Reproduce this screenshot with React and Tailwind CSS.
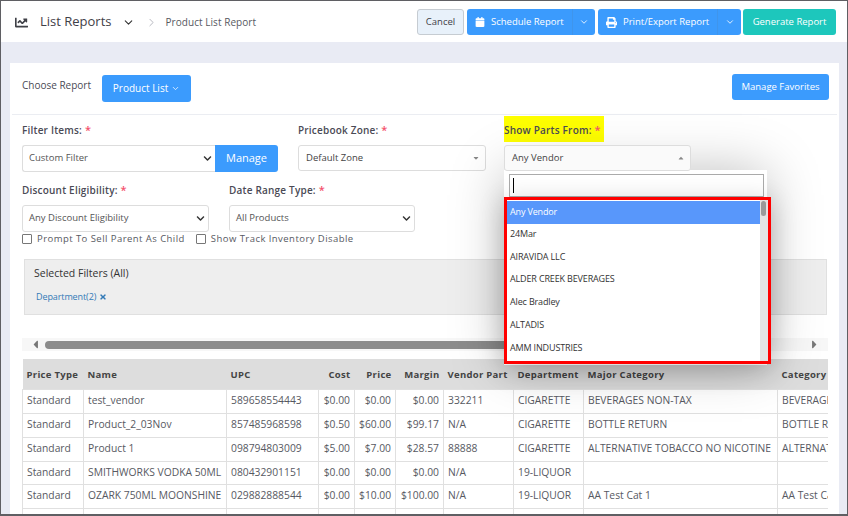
import React from "react";
import { FaChartLine, FaCalendar, FaPrint, FaTimes, FaChevronDown, FaCaretUp, FaCaretDown, FaCaretLeft, FaCaretRight } from "react-icons/fa";
import { ChevronDown, ChevronRight } from "lucide-react";

const cols = [
  ["Price Type", 61, "left"], ["Name", 143, "left"], ["UPC", 92, "left"], ["Cost", 36, "right"], ["Price", 41, "right"],
  ["Margin", 48, "right"], ["Vendor Part", 70, "left"], ["Department", 70, "left"], ["Major Category", 194, "left"], ["Category", 90, "left"],
];
const rows = [
  ["Standard", "test_vendor", "589658554443", "$0.00", "$0.00", "$0.00", "332211", "CIGARETTE", "BEVERAGES NON-TAX", "BEVERAGES NON-TAX"],
  ["Standard", "Product_2_03Nov", "857485968598", "$0.50", "$60.00", "$99.17", "N/A", "CIGARETTE", "BOTTLE RETURN", "BOTTLE RETURN"],
  ["Standard", "Product 1", "098794803009", "$5.00", "$7.00", "$28.57", "88888", "CIGARETTE", "ALTERNATIVE TOBACCO NO NICOTINE", "ALTERNATIVE"],
  ["Standard", "SMITHWORKS VODKA 50ML", "080432901151", "$0.00", "$0.00", "$0.00", "N/A", "19-LIQUOR", "", ""],
  ["Standard", "OZARK 750ML MOONSHINE", "029882888544", "$0.00", "$10.00", "$100.00", "N/A", "19-LIQUOR", "AA Test Cat 1", "AA Test Cat 1"],
  ["", "", "", "", "", "", "", "", "", ""],
];
const vendors = ["24Mar", "AIRAVIDA LLC", "ALDER CREEK BEVERAGES", "Alec Bradley", "ALTADIS", "AMM INDUSTRIES"];

function Label({ children, className = "" }) {
  return (
    <div className={"text-[10px] leading-[14px] tracking-[0.2px] whitespace-nowrap text-[#4a4a55] font-semibold " + className}>
      {children} <span className="text-[#f4516c] text-[11px]">*</span>
    </div>
  );
}

function NativeSelect({ text, className = "" }) {
  return (
    <div className={"h-[27px] flex items-center justify-between bg-white border border-[#ddd] rounded-[3px] pl-[6px] pr-[3px] text-[9.5px] text-[#555] " + className}>
      <span>{text}</span>
      <FaChevronDown className="text-[9px] text-[#333]" />
    </div>
  );
}

function Check({ text }) {
  return (
    <label className="flex items-center gap-[5px] text-[9.5px] tracking-[0.45px] whitespace-nowrap text-[#575962]">
      <span className="w-[10px] h-[10px] bg-white border border-[#777] rounded-[1px]" />
      {text}
    </label>
  );
}

function SplitBtn({ icon, text, w, arrow }) {
  return (
    <div className={"h-[26px] flex bg-[#3b9bfd] rounded-[3px] text-white text-[9.5px] " + w}>
      <div className="flex-1 flex items-center pl-[8px] gap-[6px] border-r border-[#3f95ec]">
        {icon}
        <span>{text}</span>
      </div>
      <div className={"flex items-center justify-center " + arrow}>
        <ChevronDown size={10} strokeWidth={2} />
      </div>
    </div>
  );
}

export default function App() {
  return (
    <div className="w-[848px] h-[516px] overflow-hidden bg-[#e9ebf4] border-t border-x border-b-2 border-[#5f5f63] text-[#575962]" style={{ fontFamily: '"Open Sans", sans-serif' }}>
      <header className="h-[41px] pt-px bg-white flex items-center justify-between pl-[14px] pr-[11px]">
        <div className="flex items-center">
          <FaChartLine className="text-[13px] text-[#3f4047]" />
          <span className="ml-[12px] text-[13px] text-[#3f4047]">List Reports</span>
          <ChevronDown size={13} strokeWidth={2} className="ml-[10px] text-[#333]" />
          <ChevronRight size={13} strokeWidth={1.5} className="ml-[10px] text-[#a8a9b3]" />
          <span className="ml-[8px] text-[10px] tracking-[0.05px] text-[#575962]">Product List Report</span>
        </div>
        <div className="flex items-center">
          <div className="h-[26px] w-[47px] mr-[3px] flex items-center justify-center bg-[#e8f1fa] border border-[#c6ccd2] rounded-[3px] text-[9.5px] text-[#3f4047]">Cancel</div>
          <SplitBtn w="w-[128px] mr-[3px]" arrow="w-[22px]" icon={<FaCalendar className="text-[10px]" />} text="Schedule Report" />
          <SplitBtn w="w-[143px] mr-[2px]" arrow="w-[23px]" icon={<FaPrint className="text-[11px]" />} text="Print/Export Report" />
          <div className="h-[26px] w-[93px] flex items-center justify-center bg-[#1dc7bc] rounded-[3px] text-white text-[9.5px]">Generate Report</div>
        </div>
      </header>

      <main className="relative mt-[21px] ml-[9px] mr-[8px] bg-white h-[460px]">
        <div className="mx-[2px] h-[52px] flex items-center justify-between border-b border-[#ebedf2] pl-[10px] pr-[8px]">
          <div className="flex items-center">
            <span className="text-[10px] text-[#4a4a55] -mt-[6px]">Choose Report</span>
            <div className="ml-[11px] w-[89px] h-[27px] flex items-center justify-center gap-[3px] bg-[#3b9bfd] rounded-[3px] text-white text-[10px]">
              Product List <ChevronDown size={9} strokeWidth={2} />
            </div>
          </div>
          <div className="w-[97px] h-[26px] -mt-[3px] flex items-center justify-center bg-[#3b9bfd] rounded-[3px] text-white text-[9.5px]">Manage Favorites</div>
        </div>

        <div className="pl-[12px] pr-[10px] pt-[8px]">
          <div className="flex">
            <div className="w-[276px]">
              <Label className="mb-[8px]">Filter Items:</Label>
              <div className="flex w-[256px]">
                <NativeSelect text="Custom Filter" className="w-[193px] rounded-r-none border-r-0" />
                <div className="w-[63px] h-[27px] flex items-center justify-center bg-[#3b9bfd] rounded-r-[3px] text-white text-[11px]">Manage</div>
              </div>
            </div>
            <div className="w-[206px]">
              <Label className="mb-[8px]">Pricebook Zone:</Label>
              <div className="w-[188px] h-[26px] flex items-center justify-between border border-[#ddd] rounded-[3px] pl-[7px] pr-[5px] text-[9.5px] text-[#444]">
                Default Zone <FaCaretDown className="text-[8px] text-[#888]" />
              </div>
            </div>
            <div>
              <div className="w-[100px] bg-[#ffff00] h-[26px] -mt-[7px] mb-[3px] flex items-center pt-[2px]">
                <Label>Show Parts From:</Label>
              </div>
              <div className="relative z-10 w-[187px] h-[26px] flex items-center justify-between border border-[#ddd] rounded-[3px] bg-[#fafafa] pl-[7px] pr-[5px] text-[9.5px] text-[#444]">
                Any Vendor <FaCaretUp className="text-[8px] text-[#888]" />
              </div>
            </div>
          </div>

          <div className="flex mt-[11px]">
            <div className="w-[207px]">
              <Label className="mb-[8px]">Discount Eligibility:</Label>
              <NativeSelect text="Any Discount Eligibility" className="w-[187px]" />
            </div>
            <div>
              <Label className="mb-[8px]">Date Range Type:</Label>
              <NativeSelect text="All Products" className="w-[186px]" />
            </div>
          </div>

          <div className="flex gap-[11px] h-[14px]">
            <Check text="Prompt To Sell Parent As Child" />
            <Check text="Show Track Inventory Disable" />
          </div>

          <div className="mt-[13px] ml-[2px] w-[803px] h-[56px] bg-[#eeeeee] border border-[#e0e0e0] pl-[9px] pt-[6px]">
            <div className="text-[10.5px] leading-[14px] text-[#333]">Selected Filters (All)</div>
            <div className="mt-[10px] ml-[2px] flex items-center gap-[3px] text-[9px] tracking-[-0.1px] text-[#337ab7]">
              Department(2) <FaTimes className="text-[8px]" />
            </div>
          </div>

          <div className="mt-[23px] h-[13px] w-[806px] bg-[#f7f7f7] flex items-center justify-between px-[7px]">
            <FaCaretLeft className="text-[13px] text-[#777] shrink-0" />
            <div className="flex-1 h-[8px] ml-[3px] mr-[4px] flex">
              <div className="w-[660px] bg-[#8c8c8c] rounded-full" />
            </div>
            <FaCaretRight className="text-[13px] text-[#777] shrink-0" />
          </div>

          <div className="mt-[8px] w-[806px] overflow-hidden">
            <table className="table-fixed border-collapse w-[845px] text-[10.3px] text-[#575962]">
              <colgroup>
                {cols.map((c) => <col key={c[0]} style={{ width: c[1] }} />)}
              </colgroup>
              <thead>
                <tr className="h-[30px] bg-[#dddddd]">
                  {cols.map((c) => (
                    <th key={c[0]} className={"px-[4px] pt-[2px] text-[9.5px] font-bold text-[#444] tracking-[0.3px] whitespace-nowrap " + (c[2] === "right" ? "text-right" : "text-left")}>{c[0]}</th>
                  ))}
                </tr>
              </thead>
              <tbody>
                {rows.map((r, i) => (
                  <tr key={i} className={i === 3 ? "h-[23px]" : "h-[24px]"}>
                    {r.map((v, j) => (
                      <td key={j} className={"border border-[#e0e0e0] px-[4px] whitespace-nowrap overflow-hidden " + (cols[j][2] === "right" ? "text-right" : "text-left")}>{v}</td>
                    ))}
                  </tr>
                ))}
              </tbody>
            </table>
          </div>
        </div>

        <div className="absolute left-[494px] top-[107px] w-[263px] h-[195px] bg-white shadow-[0_0_50px_rgba(0,0,0,0.25)] pt-[4px] px-[5px]">
          <div className="h-[23px] w-[255px] border border-[#aaa] flex items-center pl-[3px]">
            <span className="w-px h-[15px] bg-black" />
          </div>
        </div>
        <div className="absolute left-[494px] top-[134px] w-[267px] h-[167px] border-[3px] border-[#ff0000] bg-white shadow-[0_5px_25px_rgba(0,0,0,0.2)] flex text-[9px] tracking-[-0.15px] text-[#333]">
          <div className="w-[253px] pt-[1px]">
            <div className="h-[23px] bg-[#5897fb] text-white flex items-center pl-[3px] pb-[2px]">Any Vendor</div>
            {vendors.map((v) => (
              <div key={v} className="h-[22.7px] flex items-center pl-[3px] pb-[3px]">{v}</div>
            ))}
          </div>
          <div className="flex-1 bg-[#e3e3e3] pl-px pt-[1px]">
            <div className="w-[5px] h-[15px] rounded-full bg-[#9a9a9a]" />
          </div>
        </div>
      </main>
    </div>
  );
}
